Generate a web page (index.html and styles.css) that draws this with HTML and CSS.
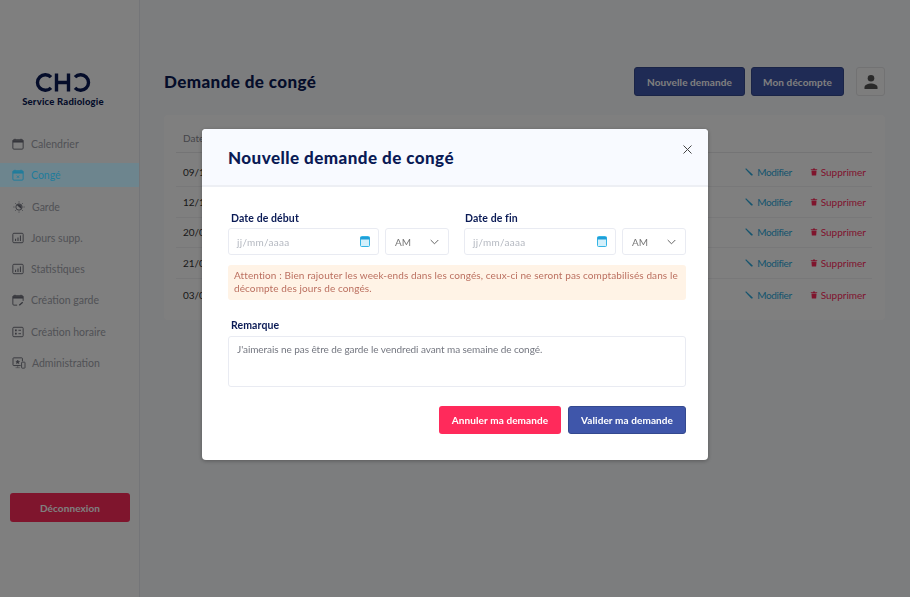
FILE: index.html
```html
<!DOCTYPE html>
<html lang="fr">
<head>
    <meta charset="UTF-8">
    <meta name="viewport" content="width=device-width, initial-scale=1.0">
    <title>Demande de congé</title>
    <link rel="stylesheet" href="styles.css">
</head>
<body>
    <div class="app-container">
        <aside class="sidebar">
            <div class="logo">
                <svg class="logo-mark" width="56" height="19" viewBox="0 0 56 19" fill="none" stroke="#0a1a55" stroke-width="3.4">
                    <path d="M16 4.2A7.8 7.8 0 1 0 16 14.8"/>
                    <path d="M21.5 .5V18.5M33.5 .5V18.5M21.5 9.5H33.5"/>
                    <path d="M40 4.2A7.8 7.8 0 1 1 40 14.8"/>
                </svg>
                <div class="logo-text">Service Radiologie</div>
            </div>
            <ul class="nav-list">
                <li class="nav-item">
                    <svg class="nav-icon" viewBox="0 0 14 14"><rect x="1" y="2" width="12" height="11" rx="1.2" fill="none" stroke="currentColor" stroke-width="1.1"/><path d="M1 2.5h12v2.8H1z" fill="currentColor"/><path d="M3.5 .8v2M10.5 .8v2" stroke="currentColor"/></svg>
                    <span>Calendrier</span>
                </li>
                <li class="nav-item active">
                    <svg class="nav-icon" viewBox="0 0 14 14"><rect x="1" y="2" width="12" height="11" rx="1.2" fill="none" stroke="currentColor" stroke-width="1.1"/><path d="M1 2.5h12v2.8H1z" fill="currentColor"/><path d="M3.5 .8v2M10.5 .8v2M5.6 7.6l2.8 2.8M8.4 7.6l-2.8 2.8" stroke="currentColor" fill="none"/></svg>
                    <span>Congé</span>
                </li>
                <li class="nav-item">
                    <svg class="nav-icon nav-icon-wide" viewBox="0 0 16 16"><circle cx="8" cy="8" r="4.2" fill="none" stroke="currentColor" stroke-width="1.2"/><path d="M5 5.2l6 5.6a4.2 4.2 0 0 0-6-5.6z" fill="currentColor"/><path d="M8 .5V2M8 14v1.5M.5 8H2M14 8h1.5M2.7 2.7l1 1M12.3 12.3l1 1M2.7 13.3l1-1M12.3 3.7l1-1" stroke="currentColor" fill="none"/></svg>
                    <span>Garde</span>
                </li>
                <li class="nav-item">
                    <svg class="nav-icon" viewBox="0 0 14 14"><rect x="1" y="1.5" width="12" height="11" rx="1.2" fill="none" stroke="currentColor" stroke-width="1.1"/><path d="M4.2 10.5V8M7 10.5V6.5M9.8 10.5V4" stroke="currentColor" stroke-width="1.2" fill="none"/></svg>
                    <span>Jours supp.</span>
                </li>
                <li class="nav-item">
                    <svg class="nav-icon" viewBox="0 0 14 14"><rect x="1" y="1.5" width="12" height="11" rx="1.2" fill="none" stroke="currentColor" stroke-width="1.1"/><path d="M4.2 10.5V8M7 10.5V6.5M9.8 10.5V4" stroke="currentColor" stroke-width="1.2" fill="none"/></svg>
                    <span>Statistiques</span>
                </li>
                <li class="nav-item">
                    <svg class="nav-icon" viewBox="0 0 14 14"><path d="M6 13H2.2A1.2 1.2 0 0 1 1 11.8V3.2A1.2 1.2 0 0 1 2.2 2h9.6A1.2 1.2 0 0 1 13 3.2V8" fill="none" stroke="currentColor" stroke-width="1.1"/><path d="M1 2.5h12v2.8H1z" fill="currentColor"/><path d="M3.5 .8v2M10.5 .8v2" stroke="currentColor"/><path d="M8.5 13l4-3.5" stroke="currentColor" stroke-width="1.5"/></svg>
                    <span>Création garde</span>
                </li>
                <li class="nav-item">
                    <svg class="nav-icon" viewBox="0 0 14 14"><rect x="1" y="1.5" width="12" height="11" rx="1.2" fill="none" stroke="currentColor" stroke-width="1.1"/><path d="M3.5 4h2v2h-2zM3.5 8h2v2h-2z" fill="currentColor"/><path d="M7.5 5h3M7.5 9h3" stroke="currentColor" stroke-width="1.1"/></svg>
                    <span>Création horaire</span>
                </li>
                <li class="nav-item">
                    <svg class="nav-icon nav-icon-wide" viewBox="0 0 16 14"><path d="M10 10H1.8A.8.8 0 0 1 1 9.2V1.8A.8.8 0 0 1 1.8 1h9.400a.8.8 0 0 1 .8.8V5" fill="none" stroke="currentColor" stroke-width="1.1"/><path d="M4 12.5h5M6.5 10v2.5M6.5 3.5l.7 1.5 1.5.2-1.1 1 .3 1.5-1.4-.8-1.4.8.3-1.5-1.1-1 1.5-.2z" stroke="currentColor" stroke-width=".6" fill="currentColor"/><rect x="11" y="6" width="4" height="7" rx=".7" fill="none" stroke="currentColor"/></svg>
                    <span>Administration</span>
                </li>
            </ul>
            <button class="btn btn-logout">Déconnexion</button>
        </aside>

        <main class="main-content">
            <header class="page-header">
                <h1 class="page-title">Demande de congé</h1>
                <div class="header-buttons">
                    <button class="btn btn-primary btn-new">Nouvelle demande</button>
                    <button class="btn btn-primary btn-count">Mon décompte</button>
                    <button class="user-btn">
                        <svg width="16" height="16" viewBox="0 0 16 16" fill="#555"><circle cx="8" cy="4.3" r="3.3"/><path d="M1.5 15v-1.8c0-2.5 4-3.7 6.5-3.7s6.5 1.2 6.5 3.7V15z"/></svg>
                    </button>
                </div>
            </header>

            <section class="card">
                <div class="table-head">Date</div>
                <div class="table-row first">
                    <span class="row-date">09/11/2021</span>
                    <span class="row-action edit"><svg class="action-icon" viewBox="0 0 10 10"><path d="M.3 1.3l1-1 8 7.5.2 1.7-1.7-.2z" fill="currentColor"/></svg>Modifier</span>
                    <span class="row-action delete"><svg class="action-icon" viewBox="0 0 10 10"><path d="M1 1.5h2.5l.5-1h2l.5 1H9v1H1zM1.8 3h6.4l-.5 6.5H2.3z" fill="currentColor"/></svg>Supprimer</span>
                </div>
                <div class="table-row">
                    <span class="row-date">12/11/2021</span>
                    <span class="row-action edit"><svg class="action-icon" viewBox="0 0 10 10"><path d="M.3 1.3l1-1 8 7.5.2 1.7-1.7-.2z" fill="currentColor"/></svg>Modifier</span>
                    <span class="row-action delete"><svg class="action-icon" viewBox="0 0 10 10"><path d="M1 1.5h2.5l.5-1h2l.5 1H9v1H1zM1.8 3h6.4l-.5 6.5H2.3z" fill="currentColor"/></svg>Supprimer</span>
                </div>
                <div class="table-row">
                    <span class="row-date">20/01/2022</span>
                    <span class="row-action edit"><svg class="action-icon" viewBox="0 0 10 10"><path d="M.3 1.3l1-1 8 7.5.2 1.7-1.7-.2z" fill="currentColor"/></svg>Modifier</span>
                    <span class="row-action delete"><svg class="action-icon" viewBox="0 0 10 10"><path d="M1 1.5h2.5l.5-1h2l.5 1H9v1H1zM1.8 3h6.4l-.5 6.5H2.3z" fill="currentColor"/></svg>Supprimer</span>
                </div>
                <div class="table-row">
                    <span class="row-date">21/02/2022</span>
                    <span class="row-action edit"><svg class="action-icon" viewBox="0 0 10 10"><path d="M.3 1.3l1-1 8 7.5.2 1.7-1.7-.2z" fill="currentColor"/></svg>Modifier</span>
                    <span class="row-action delete"><svg class="action-icon" viewBox="0 0 10 10"><path d="M1 1.5h2.5l.5-1h2l.5 1H9v1H1zM1.8 3h6.4l-.5 6.5H2.3z" fill="currentColor"/></svg>Supprimer</span>
                </div>
                <div class="table-row last">
                    <span class="row-date">03/03/2022</span>
                    <span class="row-action edit"><svg class="action-icon" viewBox="0 0 10 10"><path d="M.3 1.3l1-1 8 7.5.2 1.7-1.7-.2z" fill="currentColor"/></svg>Modifier</span>
                    <span class="row-action delete"><svg class="action-icon" viewBox="0 0 10 10"><path d="M1 1.5h2.5l.5-1h2l.5 1H9v1H1zM1.8 3h6.4l-.5 6.5H2.3z" fill="currentColor"/></svg>Supprimer</span>
                </div>
            </section>
        </main>
    </div>

    <div class="overlay">
        <div class="modal">
            <div class="modal-header">
                <h2 class="modal-title">Nouvelle demande de congé</h2>
                <svg class="modal-close" width="9" height="9" viewBox="0 0 9 9" stroke="#444"><path d="M.5 .5l8 8M8.5 .5l-8 8"/></svg>
            </div>
            <div class="modal-body">
                <div class="date-row">
                    <div class="date-group start">
                        <label class="field-label">Date de début</label>
                        <div class="date-inputs">
                            <div class="field date-field">
                                <span class="placeholder">jj/mm/aaaa</span>
                                <svg width="10" height="11" viewBox="0 0 10 11"><rect x=".5" y=".5" width="9" height="10" rx="1" fill="#d4f0fb" stroke="#35b5e5"/><path d="M.5 1h9v2.5h-9z" fill="#1f9fd8"/></svg>
                            </div>
                            <div class="field select-field">
                                <span>AM</span>
                                <svg width="9" height="6" viewBox="0 0 9 6" fill="none" stroke="#666"><path d="M.7 1l3.8 3.8L8.3 1"/></svg>
                            </div>
                        </div>
                    </div>
                    <div class="date-group end">
                        <label class="field-label">Date de fin</label>
                        <div class="date-inputs">
                            <div class="field date-field">
                                <span class="placeholder">jj/mm/aaaa</span>
                                <svg width="10" height="11" viewBox="0 0 10 11"><rect x=".5" y=".5" width="9" height="10" rx="1" fill="#d4f0fb" stroke="#35b5e5"/><path d="M.5 1h9v2.5h-9z" fill="#1f9fd8"/></svg>
                            </div>
                            <div class="field select-field">
                                <span>AM</span>
                                <svg width="9" height="6" viewBox="0 0 9 6" fill="none" stroke="#666"><path d="M.7 1l3.8 3.8L8.3 1"/></svg>
                            </div>
                        </div>
                    </div>
                </div>
                <div class="alert">Attention : Bien rajouter les week-ends dans les congés, ceux-ci ne seront pas comptabilisés dans le décompte des jours de congés.</div>
                <label class="field-label remark-label">Remarque</label>
                <div class="remark-box">J'aimerais ne pas être de garde le vendredi avant ma semaine de congé.</div>
                <div class="modal-actions">
                    <button class="btn btn-cancel">Annuler ma demande</button>
                    <button class="btn btn-validate">Valider ma demande</button>
                </div>
            </div>
        </div>
    </div>
</body>
</html>
```

FILE: styles.css
```css
* {
    box-sizing: border-box;
    margin: 0;
    padding: 0;
    font-family: 'Lato', 'Noto Sans', sans-serif;
}

body {
    background-color: #f9fafc;
    height: 597px;
    overflow: hidden;
}

.app-container {
    display: flex;
    height: 597px;
}

.sidebar {
    width: 140px;
    height: 597px;
    background-color: #fff;
    border-right: 1px solid #e9ebf0;
    display: flex;
    flex-direction: column;
    padding-top: 73px;
}

.logo {
    width: 126px;
    display: flex;
    flex-direction: column;
    align-items: center;
    margin-bottom: 24px;
}

.logo-mark {
    display: block;
}

.logo-text {
    font-size: 9.5px;
    line-height: 12px;
    font-weight: 900;
    color: #0a1a55;
    margin-top: 4px;
    letter-spacing: .2px;
}

.nav-list {
    list-style: none;
}

.nav-item {
    height: 24px;
    margin-bottom: 7.3px;
    padding-left: 12px;
    display: flex;
    align-items: center;
    gap: 7px;
    font-size: 10.5px;
    color: #a2a4ac;
}

.nav-item .nav-icon {
    color: #6c6d78;
}

/* sits above the overlay, the teal stays brighter than a plain 50% dim allows */
.nav-item.active {
    position: relative;
    z-index: 2;
    background-color: #6d858e;
    color: #1f7c9c;
}

.nav-item.active .nav-icon {
    color: #1f7c9c;
}

.nav-icon {
    width: 12px;
    height: 12px;
    flex-shrink: 0;
}

.nav-icon-wide {
    width: 14px;
    margin-right: -1px;
}

.btn {
    border: 1px solid transparent;
    border-radius: 3px;
    color: #fff;
    font-size: 10px;
    font-weight: 700;
    letter-spacing: .1px;
    cursor: pointer;
}

.btn-logout {
    width: 120px;
    height: 29px;
    margin: auto 0 75px 10px;
    background-color: #ff2a5b;
    color: #fff;
}

.main-content {
    flex: 1;
    padding: 67px 25px 0 24px;
}

.page-header {
    display: flex;
    justify-content: space-between;
    align-items: center;
    margin-bottom: 19px;
}

.page-title {
    font-size: 17px;
    font-weight: 900;
    color: #0a1a55;
    letter-spacing: .4px;
}

.header-buttons {
    display: flex;
    gap: 6px;
}

.btn-primary {
    height: 29px;
    background-color: #3f56aa;
    border-color: #34498f;
}

.btn-new {
    width: 111px;
}

.btn-count {
    width: 93px;
}

.user-btn {
    width: 29px;
    height: 29px;
    margin-left: 6px;
    background-color: #fafafa;
    border: 1px solid #e4e4e6;
    border-radius: 3px;
    display: flex;
    align-items: center;
    justify-content: center;
}

.card {
    background-color: #fff;
    border-radius: 4px;
    height: 205px;
    padding: 17px 13px 0 12px;
}

.table-head {
    font-size: 10px;
    color: #8a8a92;
    height: 21px;
    padding-left: 7px;
    border-bottom: 1px solid #e8e8ea;
}

.table-row {
    height: 30.5px;
    display: flex;
    align-items: center;
    border-bottom: 1px solid #f0f0f2;
    font-size: 10px;
    padding: 0 6px 0 7px;
}

.table-row.first {
    height: 34px;
    padding-top: 4px;
}

.table-row.last {
    height: 32px;
    border-bottom: none;
}

.row-date {
    flex: 1;
    color: #333;
}

.row-action {
    display: flex;
    align-items: center;
    gap: 4px;
}

.edit {
    color: #2aa9dc;
    margin-right: 18px;
    letter-spacing: -.4px;
}

.delete {
    color: #ff2a5b;
    gap: 3px;
}

.action-icon {
    width: 8px;
    height: 8px;
}

.overlay {
    position: fixed;
    top: 0;
    left: 0;
    z-index: 1;
    width: 100%;
    height: 100%;
    background-color: rgba(0, 0, 0, 0.5);
    padding-top: 129px;
}

.modal {
    width: 506px;
    height: 331px;
    margin: 0 auto;
    background-color: #fff;
    border-radius: 4px;
    box-shadow: 0 1px 4px rgba(0, 0, 0, 0.3);
    overflow: hidden;
}

.modal-header {
    height: 58px;
    background-color: #f8faff;
    border-bottom: 2px solid #edeff4;
    display: flex;
    justify-content: space-between;
    padding: 18px 16px 0 26px;
}

.modal-title {
    font-size: 17px;
    font-weight: 900;
    color: #0a1a55;
    letter-spacing: .45px;
}

.modal-close {
    margin-top: -2px;
}

.modal-body {
    padding: 25px 22px 0 26px;
}

.date-row {
    display: flex;
    justify-content: space-between;
}

.date-group.start {
    width: 221px;
}

.date-group.end {
    width: 222px;
}

.field-label {
    display: block;
    font-size: 10.5px;
    font-weight: 700;
    color: #0a1a55;
    padding-left: 3px;
    margin-bottom: 3px;
    line-height: 13px;
    letter-spacing: .1px;
}

.date-group.end .field-label {
    padding-left: 1px;
}

.date-inputs {
    display: flex;
    gap: 6px;
}

.field {
    height: 27px;
    border: 1px solid #e9ebf2;
    border-radius: 3px;
    display: flex;
    align-items: center;
    justify-content: space-between;
    font-size: 10px;
    color: #777;
}

.date-field {
    flex: 1;
    padding: 0 8px;
}

.select-field {
    width: 64px;
    padding: 0 9px;
}

.placeholder {
    color: #b4b8c0;
    letter-spacing: .3px;
}

.alert {
    margin-top: 10px;
    height: 35px;
    background-color: #fff3e6;
    border-radius: 3px;
    padding: 4px 6px;
    font-size: 10px;
    line-height: 13px;
    color: #bb6f5f;
    letter-spacing: .1px;
}

.remark-label {
    margin-top: 19px;
    margin-bottom: 4px;
}

.remark-box {
    height: 51px;
    border: 1px solid #e9ebf2;
    border-radius: 3px;
    padding: 6px 8px;
    font-size: 10px;
    color: #747780;
    letter-spacing: -.07px;
}

.modal-actions {
    display: flex;
    justify-content: flex-end;
    gap: 7px;
    margin-top: 19px;
}

.btn-cancel {
    width: 122px;
    height: 28px;
    background-color: #ff2a5b;
}

.btn-validate {
    width: 118px;
    height: 28px;
    background-color: #3f56aa;
    border-color: #34498f;
}
```
